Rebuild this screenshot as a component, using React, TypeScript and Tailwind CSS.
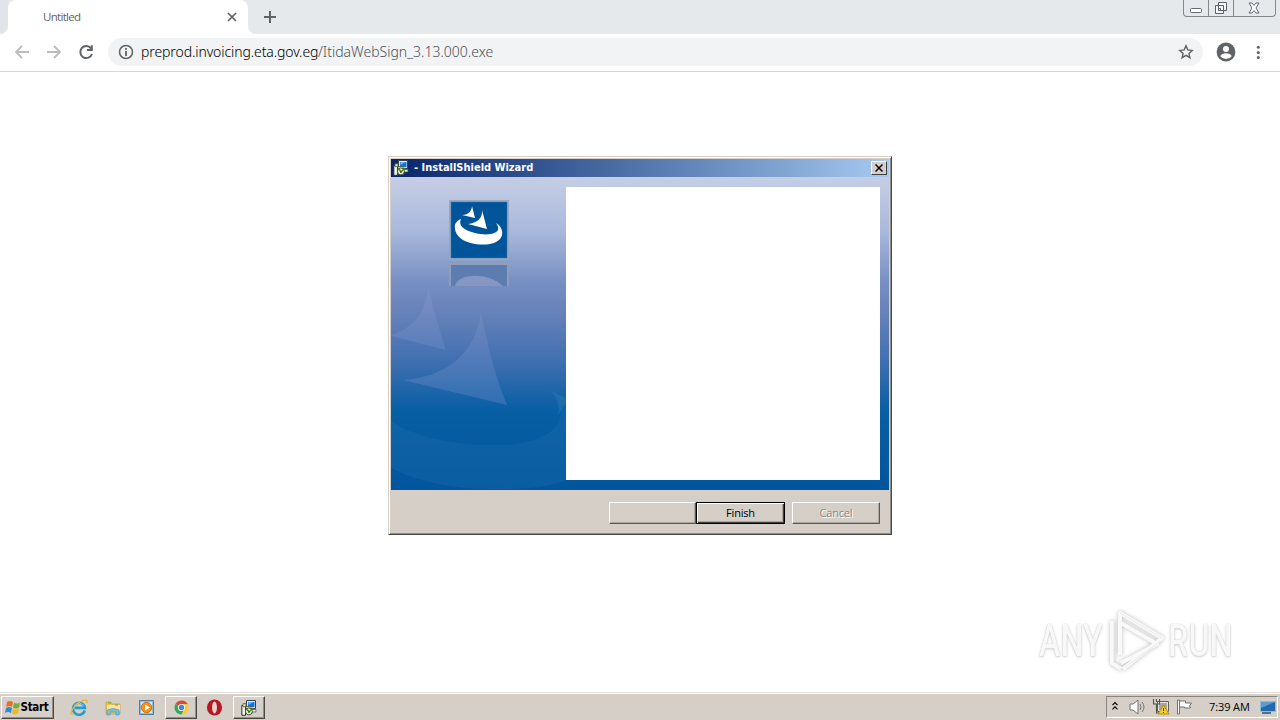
import clsx from "clsx";

interface IconProps {
  className?: string;
}

const InstallerIcon: React.FC<IconProps> = ({ className }) => (
  <svg viewBox="0 0 16 16" className={className}>
    <path d="M5.5 .5h9v8h-9z" fill="#dce8ec" stroke="#32434d" />
    <path d="M7 2h6.5v5H7z" fill="#176ee0" />
    <path d="M7.5 2h5L7.5 5z" fill="#66b7ff" />
    <path d="M7 9.5h8v2.5H7z" fill="#e7e7da" stroke="#46504c" strokeWidth=".7" />
    <path d="M.8 5.5h3.7v9.8H.8z" fill="#eef0ee" stroke="#29312c" />
    <path d="M2 3.7h3v3H2zM5 6.5h5v6H5z" fill="#efe9b7" stroke="#4b5532" strokeWidth=".8" />
    <circle cx="7.9" cy="11.4" r="3.5" fill="#e7efcd" stroke="#333b2c" strokeWidth=".9" />
    <path d="M5.5 8.5L8 12l4-4" fill="none" stroke="#46831f" strokeWidth="1.4" />
    <circle cx="7.9" cy="12" r=".8" fill="#1b351d" />
  </svg>
);

const BrowserBar = () => (
  <header className="h-[72px] border-b border-[#d5d7d9] bg-white text-[#5f6368]">
    <div className="flex h-[34px] justify-between bg-[#e5e9ec]">
      <div className="flex">
        <div className="flex w-2 bg-white">
          <div className="w-2 rounded-br-lg bg-[#e1e5e9]" />
        </div>
        <div className="flex w-60 items-center justify-between rounded-t-lg bg-white pr-[10px] pl-[35px]">
          <span className="font-['Open_Sans'] text-[11.5px] tracking-[-0.7px]">Untitled</span>
          <svg viewBox="0 0 12 12" className="size-3" fill="none" stroke="currentColor" strokeWidth="1.7">
            <path d="M2 2l8 8M10 2l-8 8" />
          </svg>
        </div>
        <div className="flex w-2 bg-white">
          <div className="w-2 rounded-bl-lg bg-[#e5e9ec]" />
        </div>
        <svg viewBox="0 0 14 14" className="mt-[10px] ml-[7px] size-[14px]" fill="none" stroke="currentColor" strokeWidth="2">
          <path d="M7 1v12M1 7h12" />
        </svg>
      </div>
      <div className="mr-1 flex h-[17px] w-[93px] rounded-b-[4px] border border-t-0 border-[#85888b]">
        <div className="flex w-[25px] items-center justify-center border-r border-[#85888b]">
          <svg viewBox="0 0 14 14" className="-mt-[3px] size-[14px]"><rect x="1.5" y="8.5" width="11" height="4" rx="1" fill="#fff" stroke="#656c74" /></svg>
        </div>
        <div className="flex w-[25px] items-center justify-center border-r border-[#85888b]">
          <svg viewBox="0 0 14 14" className="size-[14px]" fill="#f6f7f8" stroke="#59616a">
            <path d="M4.5 1.5h8v8h-8zM1.5 4.5h8v8h-8z" /><path d="M4.5 7.5h2v2h-2z" />
          </svg>
        </div>
        <div className="flex flex-1 items-center justify-center">
          <svg viewBox="0 0 12 12" className="mr-px size-3"><path d="M1 1h3l2 2.5L8 1h3L8 6l3 5H8L6 8.5 4 11H1l3-5z" fill="#fff" stroke="#626a72" /></svg>
        </div>
      </div>
    </div>
    <div className="flex h-9 items-center pl-[14px]">
      <svg viewBox="0 0 16 16" className="size-4 text-[#babcbe]" fill="none" stroke="currentColor" strokeWidth="1.8"><path d="M15 8H2M8 2L2 8l6 6" /></svg>
      <svg viewBox="0 0 16 16" className="ml-4 size-4 text-[#babcbe]" fill="none" stroke="currentColor" strokeWidth="1.8"><path d="M1 8h13M8 2l6 6-6 6" /></svg>
      <svg viewBox="0 0 16 16" className="ml-4 size-4" fill="none" stroke="currentColor" strokeWidth="2"><path d="M13 4.3A6 6 0 1 0 14 10M9 6h4.8V1.2" /></svg>
      <div className="ml-[14px] flex h-7 w-[1095px] items-center rounded-full bg-[#f1f3f4] pr-[9px] pl-[10px]">
        <svg viewBox="0 0 16 16" className="size-4" fill="none" stroke="currentColor" strokeWidth="1.5"><circle cx="8" cy="8" r="6.5" /><path d="M8 7v5M8 4v1.7" strokeWidth="1.8" /></svg>
        <p className="mb-[2px] ml-[7px] flex flex-1 font-['Noto_Sans'] text-[14px] font-light whitespace-nowrap">
          <span className="w-[177px] tracking-[-0.1px] text-black">preprod.invoicing.eta.gov.eg</span>
          <span className="text-[#4d5258]">/ItidaWebSign_3.13.000.exe</span>
        </p>
        <svg viewBox="0 0 16 16" className="size-4" fill="none" stroke="currentColor" strokeWidth="1.4"><path d="M8 1.8l1.8 4.1 4.4.5-3.3 3 1 4.3L8 11.4l-3.9 2.3 1-4.3-3.3-3 4.4-.5z" /></svg>
      </div>
      <svg viewBox="0 0 20 20" className="ml-[13px] size-5"><circle cx="10" cy="10" r="9.4" fill="#5f6368" /><circle cx="10" cy="7" r="3" fill="#fff" /><path d="M4.3 14.2c1-4 10.4-4 11.4 0a7.2 7.2 0 0 1-11.4 0z" fill="#fff" /></svg>
      <svg viewBox="0 0 16 16" className="ml-[14px] size-4" fill="currentColor"><circle cx="8.3" cy="3.3" r="1.5" /><circle cx="8.3" cy="8.4" r="1.5" /><circle cx="8.3" cy="13.5" r="1.5" /></svg>
    </div>
  </header>
);

const SidePanel = () => (
  <svg viewBox="0 0 175 313" className="h-[313px] w-[175px] shrink-0">
    <defs>
      <linearGradient id="sail" x1="0" y1="0" x2="0" y2="1"><stop stopColor="#a9afe0" stopOpacity=".14" /><stop offset="1" stopColor="#7893cf" stopOpacity=".3" /></linearGradient>
    </defs>
    <path d="M37 110C36 137 20 152 0 158v1l55 14C47 149 42 130 37 110z" fill="url(#sail)" />
    <path d="M90 134C85 178 54 200 12 203l104 25C103 197 96 165 90 134z" fill="url(#sail)" />
    <path d="M160 214C185 242 162 270 96 268C56 267 20 258 0 244v47c34 17 71 22 111 21c30 0 51-3 64-9v-82z" fill="#1c6ead" opacity=".35" />
    <path d="M160 214q10 12 7 25l8-14v-4z" fill="#3781bb" opacity=".3" />
    <rect x="59" y="24" width="58" height="58" fill="#00549a" stroke="#9aa9c0" strokeWidth="2" />
    <path d="M60 81V25h56v56z" fill="none" stroke="#3979b0" strokeWidth=".5" />
    <path d="M81 29c0 4-3 9-10 9l13 3zM91 33c1 8-5 13-14 14l19 5z" fill="#fff" />
    <path d="M64 51c-1-3 1-7 6-9-3 6 2 11 14 14 12 3 21 1 23-3q1-3-2-7c5 3 7 8 6 12-2 8-13 11-27 9-12-2-20-8-20-16z" fill="#fff" />
    <path d="M58 84h60v25H58z" fill="#8f9dbd" />
    <path d="M60 88h56v21H60z" fill="#5d7caf" />
    <path d="M64 109c2-12 31-15 48 0z" fill="#8797c4" />
  </svg>
);

const WizardButton: React.FC<{ label?: string; variant?: "focused" | "disabled"; className?: string }> = ({ label, variant, className }) => (
  <button
    className={clsx(
      "h-[22px] border border-t-white border-r-[#5b5a57] border-b-[#5b5a57] border-l-white bg-[#d5cfc8] text-center font-['Open_Sans'] text-[11px] leading-5 tracking-[-0.2px] text-black shadow-[inset_-1px_-1px_#aaa59e]",
      variant === "focused" && "border-black! shadow-[inset_1px_1px_#fff,inset_-1px_-1px_#404040,inset_-2px_-2px_#aaa59e]",
      variant === "disabled" && "text-[#8a8782]! [text-shadow:1px_1px_#fff]",
      className
    )}
  >
    {label}
  </button>
);

const Wizard = () => (
  <section className="mx-auto h-[379px] w-[504px] border border-t-[#d4d0c8] border-r-[#484844] border-b-[#484844] border-l-[#d4d0c8] bg-[#d5cfc8] shadow-[inset_1px_1px_#fff,inset_-1px_-1px_#918e88]">
    <div className="mx-[2px] mt-[2px] flex h-[18px] items-center bg-gradient-to-r from-[#09246a] to-[#a6caf0] pr-[2px] pl-[2px]">
      <InstallerIcon className="size-4" />
      <h1 className="ml-[5px] flex-1 font-['DejaVu_Sans'] text-[11px] font-bold text-white [font-stretch:condensed]">- InstallShield Wizard</h1>
      <div className="flex h-[14px] w-4 items-center justify-center border border-t-white border-r-[#404040] border-b-[#404040] border-l-white bg-[#d5cfc8]">
        <svg viewBox="0 0 8 8" className="size-2"><path d="M.5 .5l7 7M7.5 .5l-7 7" stroke="#000" strokeWidth="1.5" /></svg>
      </div>
    </div>
    <div className="mx-[2px] flex h-[313px] bg-[linear-gradient(180deg,#c5cee5_0%,#aab9dc_17%,#7890c3_33%,#6882ba_43%,#406fb0_59%,#095fa4_74%,#00559c_100%)]">
      <SidePanel />
      <div className="mt-[10px] h-[293px] w-[314px] bg-white" />
    </div>
    <div className="flex pt-3 pl-[220px]">
      <WizardButton className="w-[87px]" />
      <WizardButton label="Finish" variant="focused" className="w-[89px]" />
      <WizardButton label="Cancel" variant="disabled" className="ml-[7px] w-[88px]" />
    </div>
  </section>
);

const Watermark = () => (
  <div className="absolute top-[536px] left-[1039px] flex h-[66px] w-[200px] items-center font-['Roboto'] text-[45px] font-medium text-[#f8f8f8] [text-shadow:0_1px_3px_#c9c9c9,0_0_1px_#bcbcbc]">
    <span className="w-[68px] origin-left scale-x-[.72]">ANY</span>
    <svg viewBox="0 0 60 66" className="h-[66px] w-[60px] shrink-0 drop-shadow-[0_0_2px_#bbb]" fill="none" stroke="#f9f9f9" strokeWidth="4" strokeLinejoin="round">
      <path d="M13 47V5l42 25-39 31M14 15L50 36 14 55M5 13v42l9 6" />
      <path d="M7 12v43M18 59l36-26M13 5l42 25" stroke="#e9e9e9" strokeWidth="1" />
    </svg>
    <span className="ml-px w-[66px] origin-left scale-x-[.72]">RUN</span>
  </div>
);

const IEIcon = () => (
  <svg viewBox="0 0 18 18" className="size-[18px]" fill="none">
    <path d="M14.8 11.5A6 6 0 1 1 15 8.9H5" stroke="#269bd5" strokeWidth="2.6" />
    <path d="M4 6.5q5-5 10 0" stroke="#76cdf2" strokeWidth="1" />
    <path d="M3 15c-4 2-2-5 4-10S19 0 16.5 4" stroke="#e4b83a" strokeWidth="1.4" />
  </svg>
);

const ExplorerIcon = () => (
  <svg viewBox="0 0 18 18" className="size-[18px]">
    <path d="M2 3h5l1 2h8v10H2z" fill="#e8c65e" stroke="#bd9338" strokeWidth=".6" /><path d="M3 6h13v6H3z" fill="#fae69b" />
    <path d="M4 4h3M11 6h3" stroke="#55a65a" strokeWidth="1.2" /><path d="M3 11q6-3 12 0v5h-3v-3H6v3H3z" fill="#75bfe5" stroke="#4b91bb" strokeWidth=".6" />
  </svg>
);

const PlayerIcon = () => (
  <svg viewBox="0 0 18 18" className="size-[18px]">
    <path d="M1.5 1.5h14v14h-14z" fill="#8fbde7" stroke="#477ead" /><path d="M3 3h11v11H3z" fill="#d8ecff" />
    <circle cx="8.5" cy="8.5" r="5.2" fill="#f59116" stroke="#d66e06" /><path d="M7 5.5l5 3-5 3z" fill="#fff" />
  </svg>
);

const ChromeIcon = () => (
  <svg viewBox="0 0 18 18" className="size-[15px]">
    <path d="M9 9L1.7 4.8A8.5 8.5 0 0 1 16.5 5H9z" fill="#e24436" /><path d="M9 9L1.7 4.8A8.5 8.5 0 0 0 9 17.5l3.5-6.4z" fill="#34a853" /><path d="M9 5h7.5A8.5 8.5 0 0 1 9 17.5l3.5-6.5z" fill="#fbc934" />
    <circle cx="9" cy="9" r="4.3" fill="#fff" /><circle cx="9" cy="9" r="3.3" fill="#4285df" />
  </svg>
);

const TaskButton: React.FC<{ children: React.ReactNode; className?: string }> = ({ children, className }) => (
  <div className={clsx("flex h-[23px] w-8 items-center justify-center border border-t-white border-r-[#484844] border-b-[#484844] border-l-white bg-[#d5cfc8] shadow-[inset_-1px_-1px_#918e88]", className)}>{children}</div>
);

const Taskbar = () => (
  <footer className="flex h-7 items-start border-t border-[#e0ddd8] bg-[#d5cfc8] pt-[3px] shadow-[inset_0_1px_#fff]">
    <TaskButton className="ml-[1px] w-[53px]! pr-[3px]">
      <svg viewBox="0 0 16 16" className="size-4 shrink-0">
        <path d="M3 2q3-2 6 0L8 7Q5 5 2 7z" fill="#ee6b27" /><path d="M10 2.5q3 2 6 0l-1 5q-3 2-6 0z" fill="#75ae35" />
        <path d="M2 8q3-2 6 0l-1 5q-3-2-6 0z" fill="#3487d0" /><path d="M9 8.5q3 2 6 0l-1 5q-3 2-6 0z" fill="#f3b91c" />
      </svg>
      <span className="ml-px font-['DejaVu_Sans'] text-[11.5px] font-bold tracking-[-0.3px] [font-stretch:condensed]">Start</span>
    </TaskButton>
    <div className="flex h-[23px] items-center">
      <div className="ml-4"><IEIcon /></div>
      <div className="ml-4"><ExplorerIcon /></div>
      <div className="ml-4"><PlayerIcon /></div>
      <TaskButton className="ml-[9px]"><ChromeIcon /></TaskButton>
      <svg viewBox="0 0 18 18" className="ml-[9px] size-[17px]"><ellipse cx="9" cy="9" rx="8" ry="8.5" fill="#b91823" /><ellipse cx="9" cy="9" rx="2.6" ry="6.3" fill="#ead4cf" /></svg>
      <TaskButton className="ml-[10px]"><InstallerIcon className="size-4" /></TaskButton>
    </div>
    <div className="mr-[2px] ml-auto flex h-[22px] w-[172px] items-center border border-t-[#89857f] border-r-white border-b-white border-l-[#89857f]">
      <svg viewBox="0 0 8 12" className="mb-[3px] ml-[4px] h-[10px] w-2" fill="none" stroke="#000" strokeWidth="1.5"><path d="M1 5l3-3 3 3M1 10l3-3 3 3" /></svg>
      <svg viewBox="0 0 18 18" className="ml-[10px] size-[18px]" fill="#fafafa" stroke="#77736d"><path d="M1 6h3l5-4v14l-5-4H1z" /><path d="M11 6q2 3 0 6M13 4q4 5 0 10" fill="none" /></svg>
      <svg viewBox="0 0 18 18" className="ml-[5px] size-[18px]"><path d="M5.5 3.5h11v10h-11z" fill="#e8e5df" stroke="#62605b" /><path d="M7 5h8v7H7z" fill="#aaa79f" /><path d="M1.5 1v5h6V1M4.5 1v3M4.5 6v9h5" fill="none" stroke="#55524b" strokeWidth="1.1" /><path d="M11.5 7l5.5 9H6z" fill="#f6cc2b" stroke="#b68b0e" /><path d="M11.5 10v3M11.5 14v1" stroke="#403616" /></svg>
      <svg viewBox="0 0 18 18" className="ml-[6px] size-[18px]" fill="#fafafa" stroke="#77736d"><path d="M1.5 2h2v14h-2zM3.5 3h6v2h6l-2 3 1 2h-6V9h-5z" /></svg>
      <span className="ml-[15px] w-[43px] font-['Open_Sans'] text-[11px] tracking-[-0.1px] whitespace-nowrap">7:39 AM</span>
      <svg viewBox="0 0 16 16" className="ml-2 h-4 w-4"><path d="M.5 2.5h15v10H.5z" fill="#2268ae" stroke="#94b8d7" /><path d="M1 3h14L1 9z" fill="#5b9bd2" /><path d="M2 14h9" stroke="#214f79" strokeWidth="1.5" /></svg>
    </div>
  </footer>
);

const App = () => (
  <div className="flex h-[720px] w-[1280px] flex-col overflow-hidden bg-white text-black">
    <BrowserBar />
    <main className="relative flex-1 pt-[84px]">
      <Wizard />
      <Watermark />
    </main>
    <Taskbar />
  </div>
);

export default App;
